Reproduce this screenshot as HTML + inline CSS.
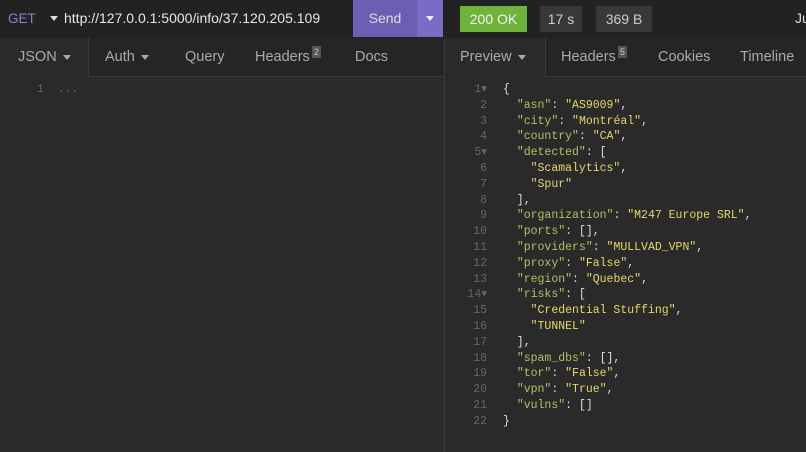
<!DOCTYPE html>
<html><head><meta charset="utf-8"><style>
*{margin:0;padding:0;box-sizing:border-box}
body{width:806px;height:452px;background:#2a2a2a;font-family:"Liberation Sans",sans-serif;overflow:hidden;position:relative;color:#ccc}
.top{position:absolute;left:0;top:0;width:806px;height:38px;background:#222}
.abs{position:absolute}
.tab{position:absolute;top:49px;font-size:14.5px;color:#aaa}
.sup{display:inline-block;background:#555;color:#ccc;font-size:9px;padding:0 2px;vertical-align:top;margin-left:2px;margin-top:-3px;line-height:12px}
.caret{display:inline-block;width:0;height:0;border-left:4px solid transparent;border-right:4px solid transparent;border-top:5px solid #aaa;vertical-align:middle;margin-left:6px}
.code{position:absolute;left:466px;top:82px;font-family:"Liberation Mono",monospace;font-size:11.5px;line-height:15.8px;white-space:pre;color:#ddd}
.ln{color:#666;display:inline-block;width:21px;text-align:right;margin-right:16px}
.k{color:#a8c661}.s{color:#e4d86c}
</style></head><body>
<div class="top"></div>
<div class="abs" style="left:8px;top:11px;font-size:13.5px;color:#8b7fd0">GET</div>
<div class="abs" style="left:50px;top:16px;width:0;height:0;border-left:4px solid transparent;border-right:4px solid transparent;border-top:5px solid #ddd"></div>
<div class="abs" style="left:64px;top:10px;font-size:14px;color:#e6e6e6">http://127.0.0.1:5000/info/37.120.205.109</div>
<div class="abs" style="left:353px;top:0;width:64px;height:37px;background:#6c5fb3;color:#ddd;font-size:14px;text-align:center;line-height:37px">Send</div>
<div class="abs" style="left:417px;top:0;width:26px;height:37px;background:#7a6cc4"></div>
<div class="abs" style="left:426px;top:16px;width:0;height:0;border-left:4px solid transparent;border-right:4px solid transparent;border-top:5px solid #eee"></div>
<div class="abs" style="left:460px;top:6px;width:67px;height:26px;background:#6fb33c;color:#f2f2f2;font-size:14px;text-align:center;line-height:26px">200 OK</div>
<div class="abs" style="left:540px;top:6px;width:42px;height:26px;background:#383838;color:#ccc;font-size:14px;text-align:center;line-height:26px">17 s</div>
<div class="abs" style="left:596px;top:6px;width:56px;height:26px;background:#383838;color:#ccc;font-size:14px;text-align:center;line-height:26px">369 B</div>
<div class="abs" style="left:795px;top:10px;font-size:14px;color:#ddd">Ju</div>
<div class="abs" style="left:88px;top:38px;width:356px;height:39px;background:#252525;border-left:1px solid #3a3a3a;border-bottom:1px solid #3a3a3a"></div>
<div class="abs" style="left:444px;top:38px;width:1px;height:414px;background:#3a3a3a"></div>
<div class="abs" style="left:545px;top:38px;width:261px;height:39px;background:#252525;border-left:1px solid #3a3a3a;border-bottom:1px solid #3a3a3a"></div>
<div class="tab" style="left:18px">JSON<span class="caret"></span></div>
<div class="tab" style="left:105px">Auth<span class="caret"></span></div>
<div class="tab" style="left:185px">Query</div>
<div class="tab" style="left:255px">Headers<span class="sup">2</span></div>
<div class="tab" style="left:355px">Docs</div>
<div class="tab" style="left:460px">Preview<span class="caret"></span></div>
<div class="tab" style="left:561px">Headers<span class="sup">5</span></div>
<div class="tab" style="left:658px">Cookies</div>
<div class="tab" style="left:740px">Timeline</div>
<div class="abs" style="left:30px;top:82px;font-family:'Liberation Mono',monospace;font-size:11.5px;line-height:15.8px;color:#666;white-space:pre"> 1  ...</div>
<div class="code"><span class="ln">1▾</span>{
<span class="ln">2</span>  <span class="k">"asn"</span>: <span class="s">"AS9009"</span>,
<span class="ln">3</span>  <span class="k">"city"</span>: <span class="s">"Montréal"</span>,
<span class="ln">4</span>  <span class="k">"country"</span>: <span class="s">"CA"</span>,
<span class="ln">5▾</span>  <span class="k">"detected"</span>: [
<span class="ln">6</span>    <span class="s">"Scamalytics"</span>,
<span class="ln">7</span>    <span class="s">"Spur"</span>
<span class="ln">8</span>  ],
<span class="ln">9</span>  <span class="k">"organization"</span>: <span class="s">"M247 Europe SRL"</span>,
<span class="ln">10</span>  <span class="k">"ports"</span>: [],
<span class="ln">11</span>  <span class="k">"providers"</span>: <span class="s">"MULLVAD_VPN"</span>,
<span class="ln">12</span>  <span class="k">"proxy"</span>: <span class="s">"False"</span>,
<span class="ln">13</span>  <span class="k">"region"</span>: <span class="s">"Quebec"</span>,
<span class="ln">14▾</span>  <span class="k">"risks"</span>: [
<span class="ln">15</span>    <span class="s">"Credential Stuffing"</span>,
<span class="ln">16</span>    <span class="s">"TUNNEL"</span>
<span class="ln">17</span>  ],
<span class="ln">18</span>  <span class="k">"spam_dbs"</span>: [],
<span class="ln">19</span>  <span class="k">"tor"</span>: <span class="s">"False"</span>,
<span class="ln">20</span>  <span class="k">"vpn"</span>: <span class="s">"True"</span>,
<span class="ln">21</span>  <span class="k">"vulns"</span>: []
<span class="ln">22</span>}</div>
</body></html>
